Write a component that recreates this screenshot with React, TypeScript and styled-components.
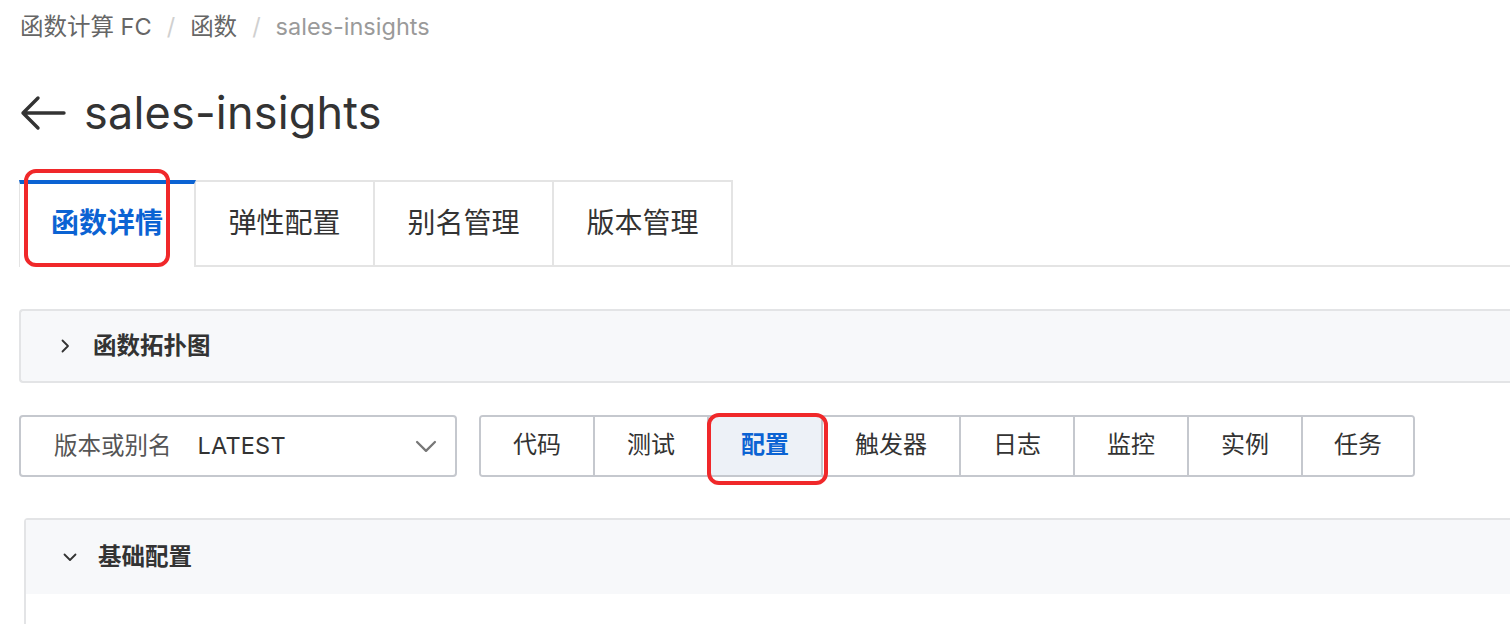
import React from "react";
import styled, { createGlobalStyle } from "styled-components";

const Global = createGlobalStyle`
  html, body { margin: 0; padding: 0; background: #fff; }
  body { font-family: Inter, "Noto Sans CJK SC", sans-serif; color: #333; overflow: hidden; }
  * { box-sizing: border-box; }
`;

const Page = styled.div`
  width: 1510px;
  height: 624px;
  padding: 12px 0 0 19px;
  overflow: hidden;
  position: relative;
`;

const Breadcrumb = styled.div`
  display: flex;
  align-items: center;
  gap: 14px;
  font-size: 23.5px;
  line-height: 30px;
  height: 30px;
  padding-left: 1px;
`;

const Crumb = styled.span<{ $current?: boolean }>`
  color: ${(p) => (p.$current ? "#9a9a9a" : "#666")};
`;

const Sep = styled.span`
  color: #d0d0d0;
  padding: 0 1px;
`;

const TitleRow = styled.div`
  display: flex;
  align-items: center;
  gap: 18px;
  margin-top: 45px;
  height: 52px;
  padding-left: 1px;
`;

const Title = styled.h1`
  margin: 0;
  font-size: 45px;
  line-height: 52px;
  font-weight: 400;
  color: #333;
  letter-spacing: 0.2px;
`;

const TabBar = styled.div`
  display: flex;
  margin-top: 41px;
  border-bottom: 2px solid #e4e4e4;
  height: 87px;
`;

const Tab = styled.div<{ $active?: boolean }>`
  display: flex;
  align-items: center;
  justify-content: center;
  height: ${(p) => (p.$active ? "87px" : "85px")};
  padding: 0 0 ${(p) => (p.$active ? "6px" : "2px")};
  font-size: 28px;
  line-height: 1;
  color: ${(p) => (p.$active ? "#0b63d3" : "#333")};
  font-weight: ${(p) => (p.$active ? 600 : 400)};
  background: #fff;
  border-top: ${(p) => (p.$active ? "4px solid #0b63d3" : "2px solid #e4e4e4")};
  border-right: 2px solid #e4e4e4;
  border-left: ${(p) => (p.$active ? "1px solid #e4e4e4" : "none")};
  margin-bottom: ${(p) => (p.$active ? "-2px" : "0")};
  width: ${(p) => (p.$active ? "177px" : "179px")};
`;

const Highlight = styled.div<{ $l: number; $t: number; $w: number; $h: number }>`
  position: absolute;
  left: ${(p) => p.$l}px;
  top: ${(p) => p.$t}px;
  width: ${(p) => p.$w}px;
  height: ${(p) => p.$h}px;
  border: 4px solid #f0282a;
  border-radius: 12px;
  pointer-events: none;
  z-index: 5;
`;

const Panel = styled.div`
  margin-top: 42px;
  height: 74px;
  border: 2px solid #e3e4e6;
  border-right: none;
  border-radius: 4px 0 0 4px;
  background: #f7f8fa;
  display: flex;
  align-items: center;
  padding-left: 36px;
  gap: 20px;
`;

const PanelTitle = styled.span`
  font-size: 23.5px;
  line-height: 1;
  font-weight: 700;
  color: #333;
`;

const Toolbar = styled.div`
  display: flex;
  align-items: center;
  margin-top: 32px;
  gap: 22px;
`;

const Select = styled.div`
  width: 438px;
  height: 62px;
  border: 2px solid #c5c8ce;
  border-radius: 4px;
  display: flex;
  align-items: center;
  padding: 0 16px 0 33px;
  font-size: 23.5px;
  line-height: 1;
`;

const SelectLabel = styled.span`
  color: #555;
  margin-right: 26px;
`;

const SelectValue = styled.span`
  color: #333;
  flex: 1;
  font-size: 23.5px;
  letter-spacing: 0.2px;
`;

const ButtonGroup = styled.div`
  display: flex;
  height: 62px;
  border: 2px solid #c5c8ce;
  border-radius: 4px;
  overflow: hidden;
`;

const GroupButton = styled.div<{ $active?: boolean; $w: number }>`
  width: ${(p) => p.$w}px;
  display: flex;
  align-items: center;
  justify-content: center;
  font-size: 24px;
  line-height: 1;
  padding-bottom: 2px;
  color: ${(p) => (p.$active ? "#0b63d3" : "#333")};
  font-weight: ${(p) => (p.$active ? 600 : 400)};
  background: ${(p) => (p.$active ? "#edf1f7" : "#fff")};
  & + & {
    border-left: 2px solid #c5c8ce;
  }
`;

const Section = styled.div`
  margin-top: 41px;
  margin-left: 5px;
  border: 2px solid #e3e4e6;
  border-right: none;
  border-bottom: none;
  border-radius: 4px 0 0 0;
  height: 200px;
`;

const SectionHeader = styled.div`
  height: 74px;
  background: #f7f8fa;
  display: flex;
  align-items: center;
  padding-left: 36px;
  gap: 20px;
`;

const Chevron = ({ dir, size = 16, color = "#333", w = 1.8 }: { dir: "right" | "down"; size?: number; color?: string; w?: number }) => (
  <svg width={size} height={size} viewBox="0 0 16 16" fill="none">
    {dir === "right" ? (
      <path d="M5.5 2.5 L11 8 L5.5 13.5" stroke={color} strokeWidth={w} strokeLinecap="round" strokeLinejoin="round" />
    ) : (
      <path d="M2.5 5.5 L8 11 L13.5 5.5" stroke={color} strokeWidth={w} strokeLinecap="round" strokeLinejoin="round" />
    )}
  </svg>
);

const BackArrow = () => (
  <svg width="46" height="36" viewBox="0 0 46 36" fill="none">
    <path d="M44 18 H3 M18 3 L3 18 L18 33" stroke="#333" strokeWidth="3.4" strokeLinecap="round" strokeLinejoin="round" />
  </svg>
);

const buttons: { label: string; w: number; active?: boolean }[] = [
  { label: "代码", w: 112 },
  { label: "测试", w: 114 },
  { label: "配置", w: 114, active: true },
  { label: "触发器", w: 138 },
  { label: "日志", w: 114 },
  { label: "监控", w: 114 },
  { label: "实例", w: 114 },
  { label: "任务", w: 112 },
];

export default function App() {
  return (
    <>
      <Global />
      <Page>
        <Breadcrumb>
          <Crumb>函数计算 FC</Crumb>
          <Sep>/</Sep>
          <Crumb>函数</Crumb>
          <Sep>/</Sep>
          <Crumb $current>sales-insights</Crumb>
        </Breadcrumb>
        <TitleRow>
          <BackArrow />
          <Title>sales-insights</Title>
        </TitleRow>
        <TabBar>
          <Tab $active>函数详情</Tab>
          <Tab>弹性配置</Tab>
          <Tab>别名管理</Tab>
          <Tab>版本管理</Tab>
        </TabBar>
        <Panel>
          <Chevron dir="right" size={16} />
          <PanelTitle>函数拓扑图</PanelTitle>
        </Panel>
        <Toolbar>
          <Select>
            <SelectLabel>版本或别名</SelectLabel>
            <SelectValue>LATEST</SelectValue>
            <Chevron dir="down" size={26} color="#777" w={1.4} />
          </Select>
          <ButtonGroup>
            {buttons.map((b) => (
              <GroupButton key={b.label} $w={b.w} $active={b.active}>
                {b.label}
              </GroupButton>
            ))}
          </ButtonGroup>
        </Toolbar>
        <Section>
          <SectionHeader>
            <Chevron dir="down" size={16} />
            <PanelTitle>基础配置</PanelTitle>
          </SectionHeader>
        </Section>
        <Highlight $l={24} $t={169} $w={146} $h={98} />
        <Highlight $l={707} $t={413} $w={121} $h={72} />
      </Page>
    </>
  );
}
